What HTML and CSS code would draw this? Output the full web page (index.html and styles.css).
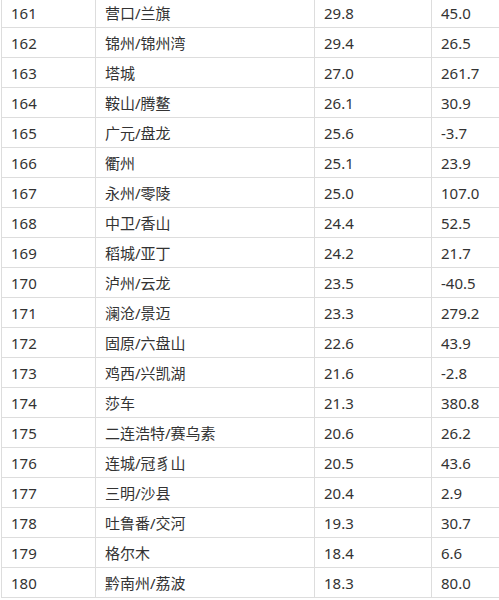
FILE: index.html
```html
<!DOCTYPE html>
<html>
<head>
<meta charset="utf-8">
<link rel="stylesheet" href="styles.css">
</head>
<body>
<div class="wrap">
<table class="data">
<colgroup><col class="c1"><col class="c2"><col class="c3"><col class="c4"></colgroup>
<tbody>
<tr><td>161</td><td>营口/兰旗</td><td>29.8</td><td>45.0</td></tr>
<tr><td>162</td><td>锦州/锦州湾</td><td>29.4</td><td>26.5</td></tr>
<tr><td>163</td><td>塔城</td><td>27.0</td><td>261.7</td></tr>
<tr><td>164</td><td>鞍山/腾鳌</td><td>26.1</td><td>30.9</td></tr>
<tr><td>165</td><td>广元/盘龙</td><td>25.6</td><td>-3.7</td></tr>
<tr><td>166</td><td>衢州</td><td>25.1</td><td>23.9</td></tr>
<tr><td>167</td><td>永州/零陵</td><td>25.0</td><td>107.0</td></tr>
<tr><td>168</td><td>中卫/香山</td><td>24.4</td><td>52.5</td></tr>
<tr><td>169</td><td>稻城/亚丁</td><td>24.2</td><td>21.7</td></tr>
<tr><td>170</td><td>泸州/云龙</td><td>23.5</td><td>-40.5</td></tr>
<tr><td>171</td><td>澜沧/景迈</td><td>23.3</td><td>279.2</td></tr>
<tr><td>172</td><td>固原/六盘山</td><td>22.6</td><td>43.9</td></tr>
<tr><td>173</td><td>鸡西/兴凯湖</td><td>21.6</td><td>-2.8</td></tr>
<tr><td>174</td><td>莎车</td><td>21.3</td><td>380.8</td></tr>
<tr><td>175</td><td>二连浩特/赛乌素</td><td>20.6</td><td>26.2</td></tr>
<tr><td>176</td><td>连城/冠豸山</td><td>20.5</td><td>43.6</td></tr>
<tr><td>177</td><td>三明/沙县</td><td>20.4</td><td>2.9</td></tr>
<tr><td>178</td><td>吐鲁番/交河</td><td>19.3</td><td>30.7</td></tr>
<tr><td>179</td><td>格尔木</td><td>18.4</td><td>6.6</td></tr>
<tr><td>180</td><td>黔南州/荔波</td><td>18.3</td><td>80.0</td></tr>
</tbody>
</table>
</div>
</body>
</html>
```
FILE: styles.css
```css
html, body {
  margin: 0;
  padding: 0;
  background: #fff;
  overflow: hidden;
}
.wrap {
  width: 499px;
  height: 600px;
  overflow: hidden;
}
.data {
  border-collapse: collapse;
  margin: -3px 0 0 1px;
  width: 560px;
  table-layout: fixed;
  font-family: "Noto Sans", "Noto Sans CJK SC", sans-serif;
  font-size: 15px;
  color: #333;
}
.c1 { width: 94px; }
.c2 { width: 219px; }
.c3 { width: 117px; }
.c4 { width: 130px; }
.data td {
  border: 1px solid #ddd;
  height: 30px;
  padding: 0 0 0 9px;
  box-sizing: border-box;
  vertical-align: middle;
  white-space: nowrap;
  line-height: 20px;
}
```
